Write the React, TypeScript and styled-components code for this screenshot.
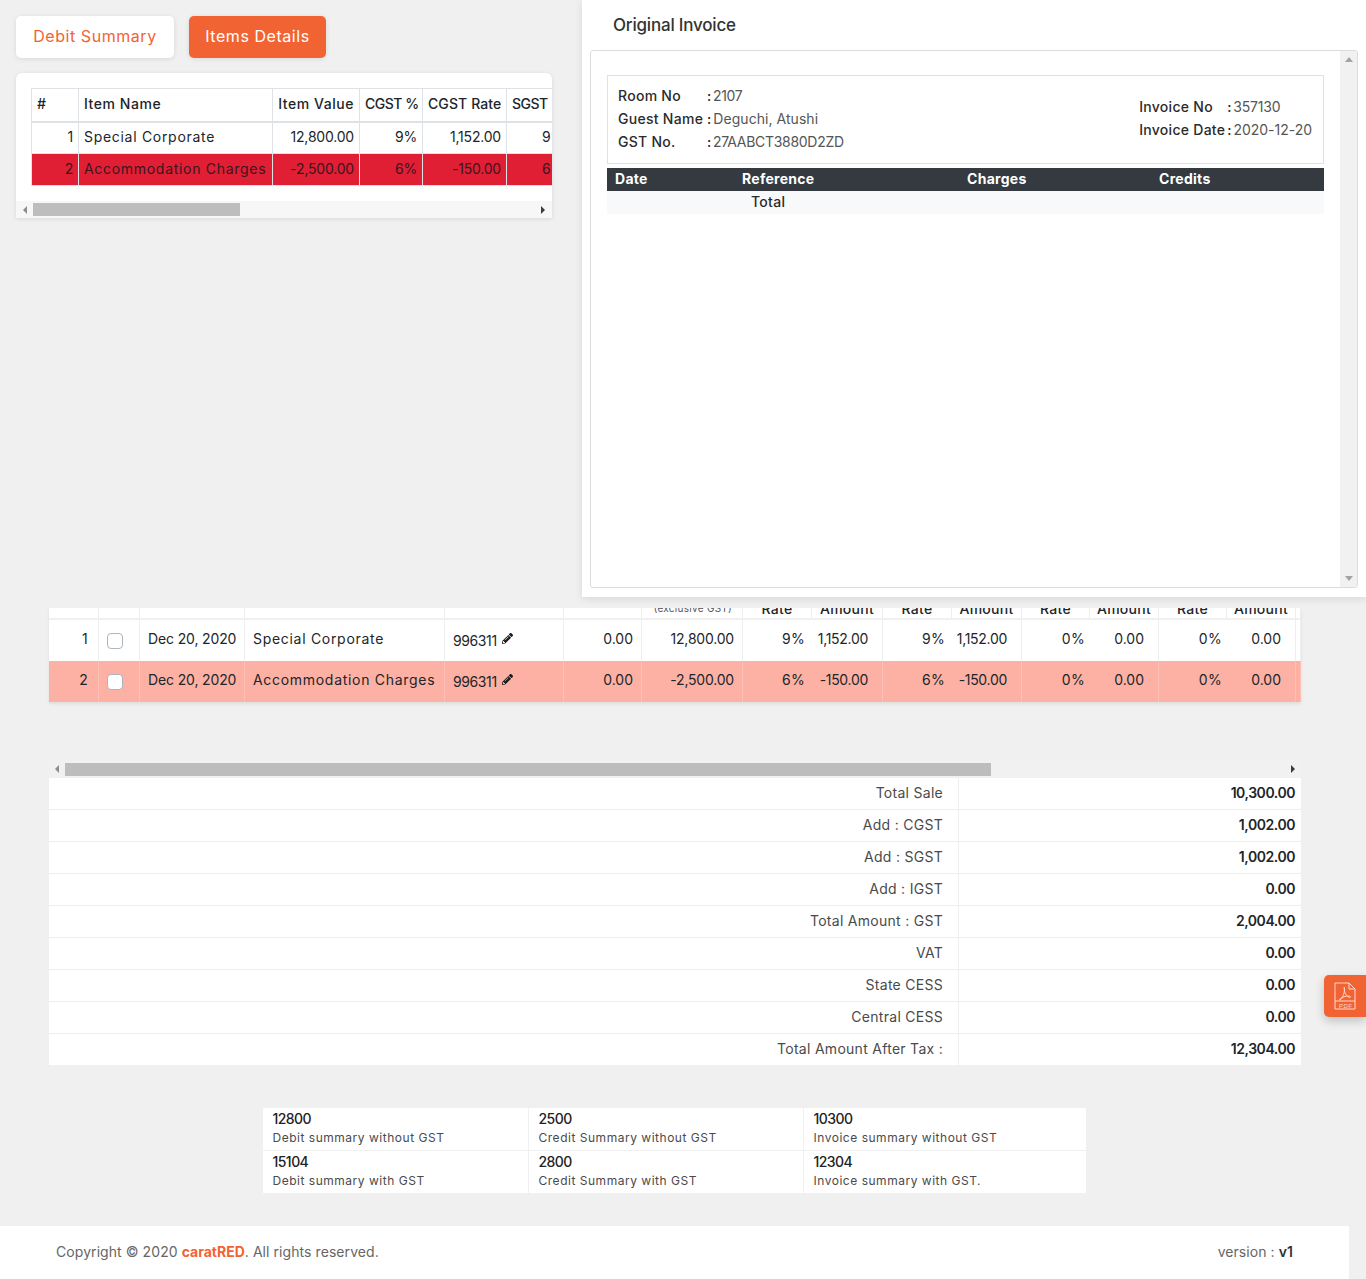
import React from "react";
import styled, { createGlobalStyle } from "styled-components";
import { FaPencilAlt } from "react-icons/fa";

const ORANGE = "#f26334";

const Global = createGlobalStyle`
  html, body { margin: 0; padding: 0; background: #f0f0f0; }
  body { font-family: Inter, "Liberation Sans", sans-serif; font-size: 14px; color: #212529; letter-spacing: .28px; }
  * { box-sizing: border-box; }
`;

const Page = styled.div`
  width: 1366px;
  height: 1279px;
  overflow: hidden;
`;

const TopSheet = styled.section`
  position: relative;
  z-index: 2;
  height: 608px;
  padding: 16px;
  background: #f0f0f0;
`;

const Tabs = styled.div`
  display: flex;
  gap: 15px;
`;

const Tab = styled.button<{ $active?: boolean }>`
  height: 42px;
  padding: 0 0 2px;
  width: ${(p) => (p.$active ? 137 : 158)}px;
  border: 0;
  border-radius: 5px;
  font: inherit;
  font-size: 16px;
  letter-spacing: .55px;
  color: ${(p) => (p.$active ? "#fff" : ORANGE)};
  background: ${(p) => (p.$active ? ORANGE : "#fff")};
  box-shadow: 0 1px 5px rgba(0, 0, 0, .1);
`;

const ItemsCard = styled.div`
  width: 536px;
  height: 145px;
  margin-top: 15px;
  display: flex;
  flex-direction: column;
  background: #fff;
  border-radius: 6px 6px 0 0;
  box-shadow: 0 1px 4px rgba(0, 0, 0, .1);
  overflow: hidden;
`;

const ItemsScroller = styled.div`
  flex: 1;
  padding: 15px 0 0 15px;
  overflow: hidden;
`;

const ItemsTable = styled.table`
  table-layout: fixed;
  width: 602px;
  border-collapse: collapse;
  td, th {
    border: 1px solid #dee2e6;
    padding: 0 5px 2px;
    height: 32px;
    white-space: nowrap;
    overflow: hidden;
  }
  th { font-weight: 500; height: 33px; border-bottom-width: 2px; }
`;

const ItemsHead = styled.th<{ $right?: boolean; $ls: number }>`
  text-align: ${(p) => (p.$right ? "right" : "left")};
  letter-spacing: ${(p) => p.$ls}px;
`;

const ItemsRow = styled.tr<{ $alert?: boolean }>`
  background: ${(p) => (p.$alert ? "#e01f35" : "#fff")};
  color: ${(p) => (p.$alert ? "#3a1620" : "#212529")};
  td { font-weight: 400; }
`;

const ItemsCell = styled.td<{ $right?: boolean }>`
  text-align: ${(p) => (p.$right ? "right" : "left")};
  letter-spacing: ${(p) => (p.$right ? "-.2px" : ".7px")};
`;

const Track = styled.div<{ $height: number; $bg: string }>`
  flex: none;
  height: ${(p) => p.$height}px;
  display: flex;
  align-items: center;
  background: ${(p) => p.$bg};
`;

const ArrowSlot = styled.span<{ $width: number }>`
  flex: none;
  width: ${(p) => p.$width}px;
  display: flex;
  justify-content: center;
`;

const EndSlot = styled.span<{ $pad: number }>`
  flex: 1;
  display: flex;
  justify-content: flex-end;
  padding-right: ${(p) => p.$pad}px;
`;

const ArrowLeft = styled.span`
  display: block;
  border-top: 4px solid transparent;
  border-bottom: 4px solid transparent;
  border-right: 4px solid #8d8d8d;
`;

const ArrowRight = styled.span`
  display: block;
  border-top: 4px solid transparent;
  border-bottom: 4px solid transparent;
  border-left: 4px solid #3c3c3c;
`;

const Thumb = styled.span<{ $width: number }>`
  flex: none;
  width: ${(p) => p.$width}px;
  height: 13px;
  background: #bdbdbd;
`;

const Drawer = styled.aside`
  position: absolute;
  top: 0;
  right: 0;
  width: 784px;
  height: 597px;
  background: #fff;
  box-shadow: 0 2px 8px rgba(0, 0, 0, .1);
  padding: 0 8px;
  display: flex;
  flex-direction: column;
`;

const DrawerTitle = styled.h2`
  margin: 0;
  height: 50px;
  padding: 13px 0 0 23px;
  font-size: 17px;
  line-height: 24px;
  font-weight: 500;
  letter-spacing: -.2px;
  color: #333;
`;

const InvoiceFrame = styled.div`
  height: 538px;
  display: flex;
  border: 1px solid #dcdcdc;
  border-radius: 3px;
  overflow: hidden;
`;

const InvoiceBody = styled.div`
  flex: 1;
  padding: 24px 16px 0 16px;
`;

const VTrack = styled.div`
  flex: none;
  width: 17px;
  background: #f1f1f1;
  display: flex;
  flex-direction: column;
  justify-content: space-between;
  align-items: center;
  padding: 6px 0;
`;

const ArrowUp = styled.span`
  display: block;
  border-left: 4px solid transparent;
  border-right: 4px solid transparent;
  border-bottom: 5px solid #a3a3a3;
`;

const ArrowDown = styled.span`
  display: block;
  border-left: 4px solid transparent;
  border-right: 4px solid transparent;
  border-top: 5px solid #a3a3a3;
`;

const InfoBox = styled.div`
  height: 89px;
  display: flex;
  justify-content: space-between;
  align-items: center;
  padding: 0 11px 2px 10px;
  border: 1px solid #dee2e6;
`;

const InfoGrid = styled.dl<{ $label: number; $lift?: number }>`
  margin: 0;
  padding-bottom: ${(p) => p.$lift ?? 0}px;
  display: grid;
  grid-template-columns: ${(p) => p.$label}px auto;
  grid-auto-rows: 23px;
  align-items: center;
  line-height: 23px;
  font-size: 14px;
`;

const InfoLabel = styled.dt`
  font-weight: 500;
  color: #2b2b2b;
  white-space: nowrap;
`;

const InfoValue = styled.dd<{ $ls: number }>`
  margin: 0;
  color: #555;
  white-space: nowrap;
  letter-spacing: ${(p) => p.$ls}px;
  &::before { content: ":"; margin-right: 2px; color: #222; font-weight: 500; }
`;

const LedgerTable = styled.table`
  width: 717px;
  margin-top: 4px;
  table-layout: fixed;
  border-collapse: collapse;
  th { height: 23px; padding: 0 8px 2px; text-align: left; font-weight: 700; color: #fff; background: #343a40; }
  td { height: 23px; padding: 0 8px 2px; background: #f8f9fa; font-weight: 500; color: #2b2b2b; }
`;

const TotalCell = styled.td`
  && { padding-left: 17px; }
`;

const Main = styled.main`
  width: 1252px;
  margin-left: 49px;
`;

const GridCard = styled.div`
  background: #fff;
  box-shadow: 0 2px 3px rgba(0, 0, 0, .08);
`;

const GridTable = styled.table`
  width: 1252px;
  table-layout: fixed;
  border-collapse: separate;
  border-spacing: 0;
`;

const ClipHead = styled.th`
  padding: 0;
  border-right: 1px solid #eee;
  border-bottom: 2px solid #f0f0f0;
  font-weight: 500;
  font-size: 14px;
`;

const ClipInner = styled.div`
  height: 10px;
  overflow: hidden;
  display: flex;
  justify-content: center;
  align-items: flex-end;
  line-height: 18px;
  white-space: nowrap;
`;

const ClipNote = styled(ClipInner)`
  font-size: 10px;
  font-weight: 400;
  color: #555;
  justify-content: flex-end;
  padding: 0 10px 4px 0;
  line-height: 12px;
`;

const GridRow = styled.tr<{ $tint?: boolean }>`
  height: 41px;
  background: ${(p) => (p.$tint ? "#fdb1a4" : "#fff")};
  td { border-right: 1px solid ${(p) => (p.$tint ? "rgba(255,255,255,.2)" : "#eee")}; }
`;

const GridCell = styled.td<{ $right?: number; $left?: number; $ls?: number; $open?: boolean }>`
  padding: 0 ${(p) => p.$right ?? 8}px 5px ${(p) => p.$left ?? 8}px;
  text-align: ${(p) => (p.$right !== undefined ? "right" : "left")};
  letter-spacing: ${(p) => p.$ls ?? 0.28}px;
  white-space: nowrap;
  overflow: hidden;
  ${(p) => (p.$open ? "border-right: 0 !important;" : "")}
`;

const Check = styled.input.attrs({ type: "checkbox" })`
  appearance: none;
  display: block;
  width: 16px;
  height: 16px;
  margin: 6px 0 0 0;
  background: #fff;
  border: 1px solid #adb5bd;
  border-radius: 4px;
`;

const HsnWrap = styled.span`
  display: inline-flex;
  align-items: center;
  gap: 5px;
`;

const HsnCode = styled.span`
  position: relative;
  top: 2px;
  letter-spacing: -.4px;
`;

const PencilIcon = styled(FaPencilAlt)`
  width: 11px;
  height: 11px;
  color: #1b1b1b;
`;

const GridScroll = styled.div`
  margin-top: 58px;
`;

const TotalsTable = styled.table`
  width: 1252px;
  table-layout: fixed;
  border-collapse: separate;
  border-spacing: 0;
  background: #fff;
  td { height: 32px; padding-bottom: 4px; border-bottom: 1px solid #eee; }
  tr:last-child td { border-bottom: 0; height: 31px; }
`;

const TotalsLabel = styled.td`
  width: 910px;
  padding-right: 15px;
  text-align: right;
  color: #4a4a4a;
  border-right: 1px solid #eee;
`;

const TotalsValue = styled.td`
  padding-right: 6px;
  text-align: right;
  font-weight: 600;
  letter-spacing: -.45px;
`;

const MiniTable = styled.table`
  width: 824px;
  margin: 43px 0 0 213.5px;
  table-layout: fixed;
  border-collapse: separate;
  border-spacing: 0;
  background: #fff;
  td {
    height: 43px;
    padding: 0 10px;
    border-right: 1px solid #f0f0f0;
    border-bottom: 1px solid #f0f0f0;
    vertical-align: top;
  }
  tr:last-child td { height: 42px; border-bottom: 0; }
`;

const MiniValue = styled.div`
  margin-top: 1px;
  line-height: 20px;
  font-weight: 500;
  color: #222;
  letter-spacing: -.55px;
`;

const MiniLabel = styled.div`
  font-size: 12px;
  line-height: 18px;
  color: #4a4a4a;
  letter-spacing: .52px;
`;

const Footer = styled.footer`
  width: 1349px;
  height: 53px;
  margin-top: 33px;
  padding: 0 56px 2px;
  display: flex;
  justify-content: space-between;
  align-items: center;
  background: #fff;
  color: #666;
  letter-spacing: .07px;
`;

const Brand = styled.b`
  color: ${ORANGE};
  font-weight: 700;
  letter-spacing: 0;
`;

const Version = styled.b`
  color: #333;
  font-weight: 600;
`;

const PdfButton = styled.button`
  position: absolute;
  top: 975px;
  right: 0;
  z-index: 3;
  width: 42px;
  height: 42px;
  padding: 0;
  border: 0;
  border-radius: 5px 0 0 5px;
  background: ${ORANGE};
  box-shadow: 0 4px 10px rgba(0, 0, 0, .2);
  display: flex;
  align-items: center;
  justify-content: center;
`;

const PdfLabel = styled.text`
  font-family: "Liberation Sans", sans-serif;
  font-size: 6px;
  letter-spacing: .5px;
  fill: #ffd9cc;
`;

const PdfIcon = () => (
  <svg width="22" height="28" viewBox="0 0 22 28" fill="none" stroke="#ffd9cc" strokeWidth="1">
    <path d="M1 19V1h14l6 6v12" />
    <path d="M15 1v6h6" />
    <path d="M1 19h20v8H1z" />
    <path d="M10.500 5.500c-.8 2.500.5 6 2 8 1 1.300 3.500 2.500 4 1.500s-3-1.300-5.500-.5-6 2.500-5.500 3.500 3-2.500 4-5.500 1.500-5 .5-7z" />
    <PdfLabel x="5" y="25.500" stroke="none">PDF</PdfLabel>
  </svg>
);

const Bar = ({ offset, thumb, height, bg, pad }: { offset: number; thumb: number; height: number; bg: string; pad: number }) => (
  <Track $height={height} $bg={bg}>
    <ArrowSlot $width={offset}><ArrowLeft /></ArrowSlot>
    <Thumb $width={thumb} />
    <EndSlot $pad={pad}><ArrowRight /></EndSlot>
  </Track>
);

const itemCols = [47, 194, 87, 63, 84, 63, 64];
const itemHeads: [string, number, boolean][] = [
  ["#", 0.28, false],
  ["Item Name", 0.55, false],
  ["Item Value", 0.55, true],
  ["CGST %", -0.5, true],
  ["CGST Rate", 0.1, true],
  ["SGST %", -0.5, true],
  ["SGST Rate", 0.1, true],
];
const itemRows = [
  ["1", "Special Corporate", "12,800.00", "9%", "1,152.00", "9%", "1,152.00"],
  ["2", "Accommodation Charges", "-2,500.00", "6%", "-150.00", "6%", "-150.00"],
];

const gridCols = [50, 41, 105, 200, 119, 78, 101, 69, 71, 69, 70, 68, 69, 68, 69, 5];
const clipHeads: [string, boolean?][] = [["", false], ["", false], ["", false], ["", false], ["", false], ["", false], ["(exclusive GST)", true], ["Rate"], ["Amount"], ["Rate"], ["Amount"], ["Rate"], ["Amount"], ["Rate"], ["Amount"], [""]];

const gridRows = [
  { n: "1", date: "Dec 20, 2020", name: "Special Corporate", val: "12,800.00", pc: "9%", amt: "1,152.00" },
  { n: "2", date: "Dec 20, 2020", name: "Accommodation Charges", val: "-2,500.00", pc: "6%", amt: "-150.00", tint: true },
];

const totals = [
  ["Total Sale", "10,300.00"],
  ["Add : CGST", "1,002.00"],
  ["Add : SGST", "1,002.00"],
  ["Add : IGST", "0.00"],
  ["Total Amount : GST", "2,004.00"],
  ["VAT", "0.00"],
  ["State CESS", "0.00"],
  ["Central CESS", "0.00"],
  ["Total Amount After Tax :", "12,304.00"],
];

const mini = [
  [["12800", "Debit summary without GST"], ["2500", "Credit Summary without GST"], ["10300", "Invoice summary without GST"]],
  [["15104", "Debit summary with GST"], ["2800", "Credit Summary with GST"], ["12304", "Invoice summary with GST."]],
];

export default function App() {
  return (
    <Page>
      <Global />
      <TopSheet>
        <Tabs>
          <Tab>Debit Summary</Tab>
          <Tab $active>Items Details</Tab>
        </Tabs>
        <ItemsCard>
          <ItemsScroller>
            <ItemsTable>
              <colgroup>
                {itemCols.map((w, i) => <col key={i} width={w} />)}
              </colgroup>
              <thead>
                <tr>
                  {itemHeads.map(([t, ls, right]) => (
                    <ItemsHead key={t} $ls={ls} $right={right}>{t}</ItemsHead>
                  ))}
                </tr>
              </thead>
              <tbody>
                {itemRows.map((r, i) => (
                  <ItemsRow key={i} $alert={i === 1}>
                    {r.map((c, j) => <ItemsCell key={j} $right={j !== 1}>{c}</ItemsCell>)}
                  </ItemsRow>
                ))}
              </tbody>
            </ItemsTable>
          </ItemsScroller>
          <Bar offset={17} thumb={207} height={17} bg="#f7f7f7" pad={7} />
        </ItemsCard>

        <Drawer>
          <DrawerTitle>Original Invoice</DrawerTitle>
          <InvoiceFrame>
            <InvoiceBody>
              <InfoBox>
                <InfoGrid $label={89}>
                  <InfoLabel>Room No</InfoLabel><InfoValue $ls={-0.3}>2107</InfoValue>
                  <InfoLabel>Guest Name</InfoLabel><InfoValue $ls={0.05}>Deguchi, Atushi</InfoValue>
                  <InfoLabel>GST No.</InfoLabel><InfoValue $ls={-0.3}>27AABCT3880D2ZD</InfoValue>
                </InfoGrid>
                <InfoGrid $label={88} $lift={2}>
                  <InfoLabel>Invoice No</InfoLabel><InfoValue $ls={-0.2}>357130</InfoValue>
                  <InfoLabel>Invoice Date</InfoLabel><InfoValue $ls={-0.02}>2020-12-20</InfoValue>
                </InfoGrid>
              </InfoBox>
              <LedgerTable>
                <colgroup>
                  <col width={127} /><col width={225} /><col width={192} /><col width={173} />
                </colgroup>
                <thead>
                  <tr><th>Date</th><th>Reference</th><th>Charges</th><th>Credits</th></tr>
                </thead>
                <tbody>
                  <tr><td /><TotalCell>Total</TotalCell><td /><td /></tr>
                </tbody>
              </LedgerTable>
            </InvoiceBody>
            <VTrack><ArrowUp /><ArrowDown /></VTrack>
          </InvoiceFrame>
        </Drawer>
      </TopSheet>

      <Main>
        <GridCard>
          <GridTable>
            <colgroup>
              {gridCols.map((w, i) => <col key={i} width={w} />)}
            </colgroup>
            <thead>
              <tr>
                {clipHeads.map(([t, note], i) => (
                  <ClipHead key={i}>
                    {note ? <ClipNote>{t}</ClipNote> : <ClipInner>{t}</ClipInner>}
                  </ClipHead>
                ))}
              </tr>
            </thead>
            <tbody>
              {gridRows.map((r) => (
                <GridRow key={r.n} $tint={r.tint}>
                  <GridCell $right={10} $left={0}>{r.n}</GridCell>
                  <GridCell><Check readOnly /></GridCell>
                  <GridCell $ls={-0.14}>{r.date}</GridCell>
                  <GridCell $ls={0.7}>{r.name}</GridCell>
                  <GridCell>
                    <HsnWrap><HsnCode>996311</HsnCode><PencilIcon /></HsnWrap>
                  </GridCell>
                  <GridCell $right={8} $left={0} $ls={0}>0.00</GridCell>
                  <GridCell $right={8} $left={0} $ls={-0.2}>{r.val}</GridCell>
                  <GridCell $right={7} $left={0} $open>{r.pc}</GridCell>
                  <GridCell $right={14} $left={0} $ls={-0.3}>{r.amt}</GridCell>
                  <GridCell $right={7} $left={0} $open>{r.pc}</GridCell>
                  <GridCell $right={14} $left={0} $ls={-0.3}>{r.amt}</GridCell>
                  <GridCell $right={5} $left={0} $open>0%</GridCell>
                  <GridCell $right={14} $left={0} $ls={0}>0.00</GridCell>
                  <GridCell $right={5} $left={0} $open>0%</GridCell>
                  <GridCell $right={14} $left={0} $ls={0}>0.00</GridCell>
                  <GridCell />
                </GridRow>
              ))}
            </tbody>
          </GridTable>
        </GridCard>

        <GridScroll>
          <Bar offset={16} thumb={926} height={18} bg="#f1f1f1" pad={6} />
        </GridScroll>

        <TotalsTable>
          <tbody>
            {totals.map(([l, v]) => (
              <tr key={l}>
                <TotalsLabel>{l}</TotalsLabel>
                <TotalsValue>{v}</TotalsValue>
              </tr>
            ))}
          </tbody>
        </TotalsTable>

        <MiniTable>
          <colgroup>
            <col width={266} /><col width={275} /><col width={283} />
          </colgroup>
          <tbody>
            {mini.map((row, i) => (
              <tr key={i}>
                {row.map(([v, l]) => (
                  <td key={l}>
                    <MiniValue>{v}</MiniValue>
                    <MiniLabel>{l}</MiniLabel>
                  </td>
                ))}
              </tr>
            ))}
          </tbody>
        </MiniTable>
      </Main>

      <Footer>
        <span>Copyright © 2020 <Brand>caratRED</Brand>. All rights reserved.</span>
        <span>version : <Version>v1</Version></span>
      </Footer>

      <PdfButton aria-label="PDF"><PdfIcon /></PdfButton>
    </Page>
  );
}
